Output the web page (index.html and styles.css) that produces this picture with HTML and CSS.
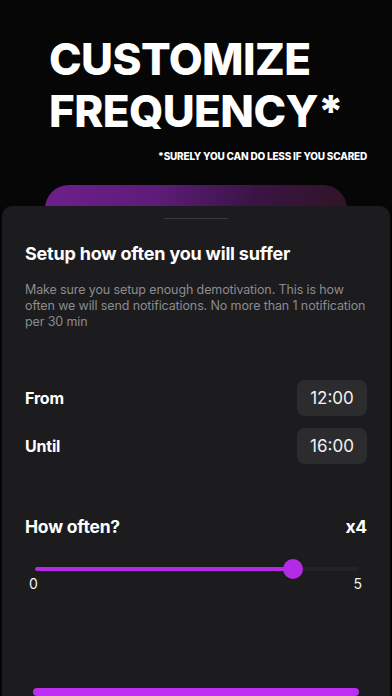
FILE: index.html
```html
<!DOCTYPE html>
<html>
<head>
<meta charset="utf-8">
<link rel="stylesheet" href="styles.css">
</head>
<body>
<div class="screen">
  <header class="hero">
    <h1 class="headline">CUSTOMIZE<br>FREQUENCY*</h1>
    <p class="note">*SURELY YOU CAN DO LESS IF YOU SCARED</p>
    <div class="card"></div>
  </header>
  <section class="sheet">
    <div class="handle"></div>
    <h2 class="title">Setup how often you will suffer</h2>
    <p class="desc">Make sure you setup enough demotivation. This is how often we will send notifications. No more than 1 notification per 30 min</p>
    <div class="rows">
      <div class="row">
        <span class="label">From</span>
        <span class="pill">12:00</span>
      </div>
      <div class="row">
        <span class="label">Until</span>
        <span class="pill">16:00</span>
      </div>
    </div>
    <div class="often">
      <span class="label">How often?</span>
      <span class="label">x4</span>
    </div>
    <div class="slider">
      <div class="track">
        <div class="fill" style="width: 80%"></div>
        <div class="thumb" style="left: 80%"></div>
      </div>
    </div>
    <div class="ticks">
      <span>0</span>
      <span>5</span>
    </div>
    <div class="button"></div>
  </section>
</div>
</body>
</html>
```

FILE: styles.css
```css
* { box-sizing: border-box; }
html, body {
  margin: 0;
  padding: 0;
  background: #060606;
}
body {
  font-family: Inter, "Noto Sans", sans-serif;
  color: #fff;
}
.screen {
  position: relative;
  width: 392px;
  height: 696px;
  overflow: hidden;
  background: #060606;
}
.hero {
  padding: 33px 25px 0 49px;
}
.headline {
  margin: 0;
  font-size: 44px;
  line-height: 52px;
  font-weight: 800;
  letter-spacing: -0.6px;
}
.note {
  margin: 13px 0 0;
  text-align: right;
  font-size: 10px;
  line-height: 12px;
  font-weight: 800;
  letter-spacing: -0.2px;
}
.card {
  margin: 23px 20px 0 -4px;
  height: 120px;
  border-radius: 24px;
  background: linear-gradient(100deg, #6e1f8c 0%, #5e1c78 35%, #3b1446 65%, #2e1420 100%);
}
.sheet {
  position: absolute;
  top: 206px;
  left: 2px;
  right: 2px;
  bottom: 0;
  background: #1c1c1e;
  border-radius: 10px 10px 0 0;
  padding: 12px 23px 0;
  display: flex;
  flex-direction: column;
}
.handle {
  align-self: center;
  width: 64px;
  height: 4px;
  border-radius: 2px;
  background: #3a3a3c;
}
.title {
  margin: 24px 0 0;
  font-size: 18px;
  line-height: 22px;
  font-weight: 700;
  letter-spacing: -0.2px;
}
.desc {
  margin: 17px 0 0;
  font-size: 12.5px;
  line-height: 16px;
  color: #8b8b90;
  letter-spacing: -0.12px;
}
.rows {
  margin-top: 50px;
  display: flex;
  flex-direction: column;
  gap: 12px;
}
.row, .often {
  display: flex;
  justify-content: space-between;
  align-items: center;
}
.label {
  font-size: 16px;
  font-weight: 700;
  letter-spacing: -0.2px;
}
.pill {
  width: 70px;
  height: 36px;
  border-radius: 8px;
  background: #2c2c2e;
  display: flex;
  align-items: center;
  justify-content: center;
  font-size: 17px;
  font-weight: 400;
  color: #f2f2f2;
}
.often {
  margin-top: 52px;
}
.often .label {
  font-size: 17.5px;
}
.slider {
  margin: 30px 9px 0 10px;
  height: 20px;
  display: flex;
  align-items: center;
}
.track {
  position: relative;
  width: 100%;
  height: 4px;
  border-radius: 2px;
  background: #232325;
}
.fill {
  height: 4px;
  border-radius: 2px;
  background: #b52ae6;
}
.thumb {
  position: absolute;
  top: 50%;
  width: 20px;
  height: 20px;
  margin: -10px 0 0 -10px;
  border-radius: 50%;
  background: #b52ae6;
}
.ticks {
  margin: 4px 5px 0 4px;
  display: flex;
  justify-content: space-between;
  font-size: 14px;
  line-height: 18px;
  color: #f0f0f0;
}
.button {
  margin: 95px 8px 0 8px;
  height: 56px;
  border-radius: 28px;
  background: #bd2ef0;
}
```
